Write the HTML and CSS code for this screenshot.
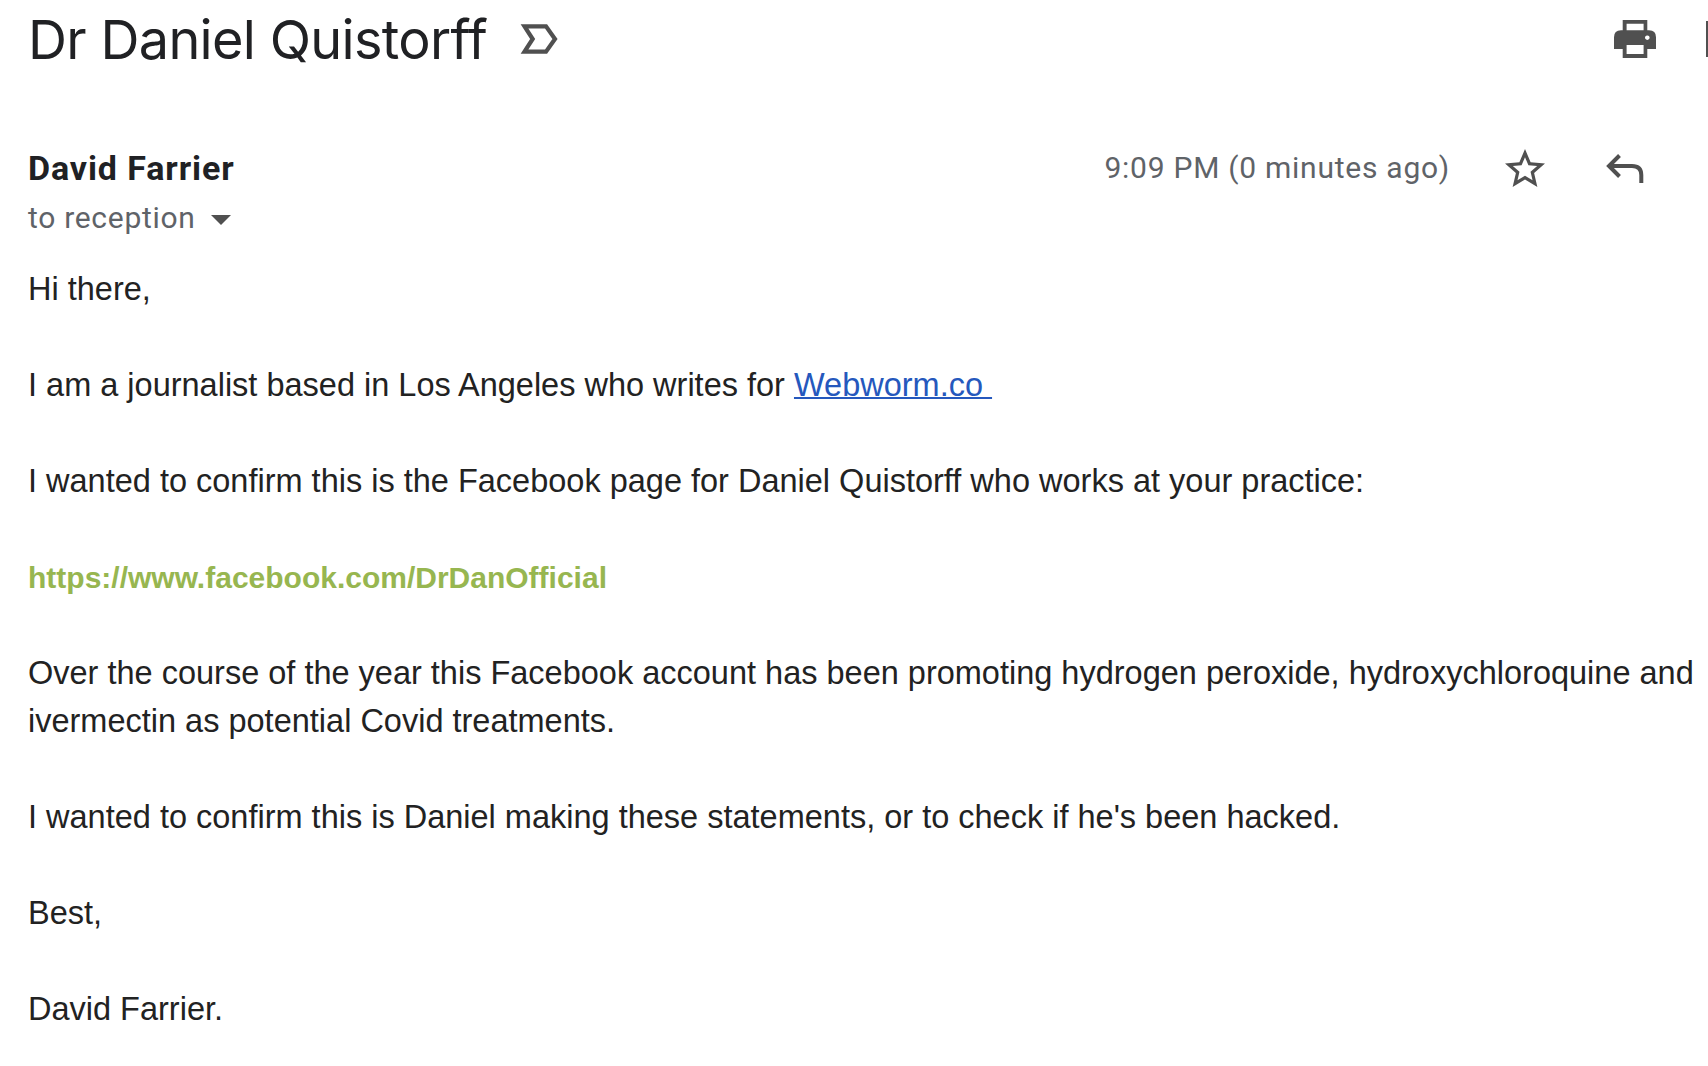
FILE: index.html
```html
<!DOCTYPE html>
<html lang="en">
<head>
<meta charset="utf-8">
<title>Dr Daniel Quistorff</title>
<link rel="stylesheet" href="styles.css">
</head>
<body>
<header class="subject">
  <h1 class="title">Dr Daniel Quistorff</h1>
  <svg class="marker" viewBox="0 0 38 30"><path d="M4.500 2.300H26L35 15 26 27.700H4.500L12.700 15Z" fill="none" stroke="#505050" stroke-width="4.200"/></svg>
  <svg class="print" viewBox="0 0 42 38"><path fill="#505050" fill-rule="evenodd" d="M8.700 0H33.300V10.300H35Q42 10.300 42 17.300V29H33.300V38H8.700V29H0V17.300Q0 10.300 7 10.300H8.700ZM12.600 3.800V10.300H29.600V3.800ZM12.600 25V33.900H29.600V25ZM33.300 15.400a2.300 2.300 0 1 0 .01 0Z"/></svg>
  <span class="edge"></span>
</header>
<section class="meta">
  <div class="people">
    <div class="sender">David Farrier</div>
    <div class="to"><span>to reception</span><span class="caret"></span></div>
  </div>
  <time class="time">9:09 PM (0 minutes ago)</time>
  <svg class="star" viewBox="2 2 20 19"><path fill="#505050" d="M22 9.240l-7.190-.62L12 2 9.190 8.630 2 9.240l5.460 4.730L5.820 21 12 17.270 18.180 21l-1.630-7.030L22 9.240zM12 15.400l-3.760 2.270 1-4.280-3.320-2.880 4.380-.38L12 6.100l1.710 4.040 4.380.38-3.320 2.880 1 4.280L12 15.400z"/></svg>
  <svg class="reply" viewBox="0 0 38 30"><path d="M13.500 1.500L3 12 13.500 22.500M3.500 12H26Q35.300 12 35.300 21V29" fill="none" stroke="#505050" stroke-width="4"/></svg>
</section>
<main class="body">
  <p>Hi there,</p>
  <p>I am a journalist based in Los Angeles who writes for <a class="link" href="#">Webworm.co&nbsp;</a></p>
  <p>I wanted to confirm this is the Facebook page for Daniel Quistorff who works at your practice:</p>
  <p class="page-link">https://www.facebook.com/DrDanOfficial</p>
  <p>Over the course of the year this Facebook account has been promoting hydrogen peroxide, hydroxychloroquine and<br>ivermectin as potential Covid treatments.</p>
  <p>I wanted to confirm this is Daniel making these statements, or to check if he's been hacked.</p>
  <p>Best,</p>
  <p>David Farrier.</p>
</main>
</body>
</html>
```
FILE: styles.css
```css
* { box-sizing: border-box; }
body { margin: 0; width: 1708px; height: 1066px; overflow: hidden; background: #fff; color: #222; font-family: "Liberation Sans", Arial, sans-serif; }
svg { display: block; flex: none; }
.subject { display: flex; align-items: center; height: 78px; padding-left: 28px; }
.title { margin: 0; padding-top: 2px; width: 492px; font: 400 54px/76px Inter, sans-serif; letter-spacing: -0.680px; color: #202124; white-space: nowrap; }
.marker { width: 38px; height: 30px; }
.print { width: 42px; height: 38px; margin-left: auto; }
.edge { width: 2px; height: 36px; margin-left: 50px; background: #505050; }
.meta { display: flex; height: 166px; padding: 66px 64px 0 28px; font-family: Roboto, sans-serif; }
.people { flex: 1; }
.sender { font-weight: 700; font-size: 34px; line-height: 48px; letter-spacing: 0.900px; color: #202124; }
.to { display: flex; align-items: center; gap: 15px; font-size: 30px; line-height: 52px; color: #5f6368; letter-spacing: 0.700px; }
.caret { margin-top: 4px; border: 10px solid transparent; border-top-color: #505050; border-bottom: 0; }
.time { font-size: 30px; line-height: 48px; color: #5f6368; letter-spacing: 0.740px; }
.star { width: 40px; height: 38px; margin: 5px 0 0 55px; }
.reply { width: 38px; height: 30px; margin: 10px 0 0 61px; }
.body { padding: 21px 0 0 28px; font-size: 32.500px; line-height: 48px; white-space: nowrap; }
.body p { margin: 0 0 48px; }
.link { color: #2558bd; text-decoration-thickness: 2px; }
.body .page-link { font-size: 30px; line-height: 50px; margin-bottom: 46px; font-weight: 700; color: #97b650; }
```
